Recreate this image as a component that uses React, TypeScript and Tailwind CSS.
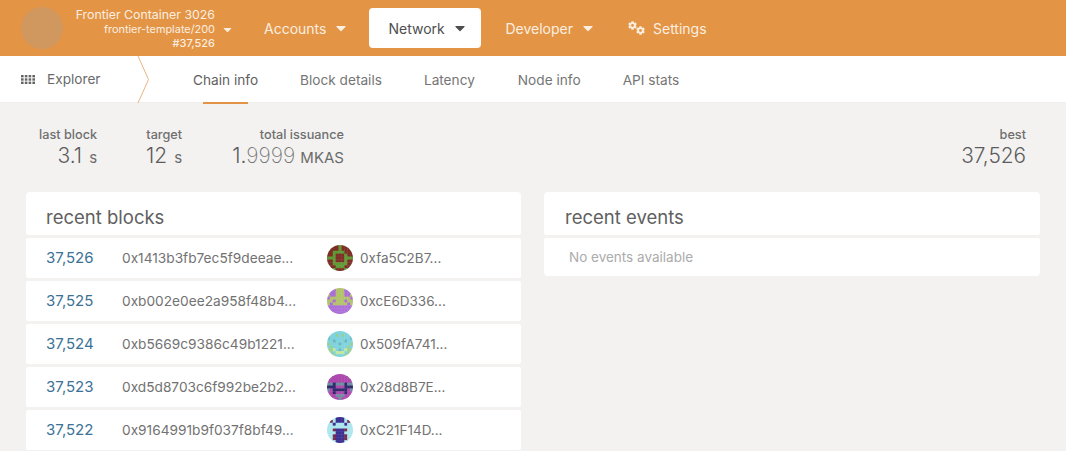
import React from "react";
import { FaCaretDown, FaCog } from "react-icons/fa";

function Identicon({ map, colors }: { map: string[]; colors: Record<string, string> }) {
  const cell = 3;
  return (
    <svg width="26" height="26" viewBox="0 0 27 27" className="shrink-0 block">
      <clipPath id="identicon-clip"><circle cx="13.5" cy="13.5" r="13.5" /></clipPath>
      <g clipPath="url(#identicon-clip)">
        {map.flatMap((row, y) =>
          row.split("").map((ch, x) => (
            <rect key={x + "-" + y} x={x * cell} y={y * cell} width={cell + 0.4} height={cell + 0.4} fill={colors[ch]} />
          ))
        )}
      </g>
    </svg>
  );
}

const blocks = [
  { n: "37,526", h: "0x1413b3fb7ec5f9deeae...", a: "0xfa5C2B7...", map: ["ggrrgrrgg", "grrrgrrrg", "rrggggrrr", "rrgrrrgrr", "gggrrrggg", "rrgrrrgrr", "rrgggggrr", "grrgggrrg", "gggrrrggg"], colors: { g: "#5f9a35", r: "#7d2f26" } },
  { n: "37,525", h: "0xb002e0ee2a958f48b4...", a: "0xcE6D336...", map: ["yppyyyppy", "pppyyyppp", "yppyyyppy", "pyyyyyyyp", "yypyyypyy", "ypyyyyypy", "ppppppppp", "ppppppppp", "ppppppppp"], colors: { p: "#ac6fd8", y: "#b3c36b" } },
  { n: "37,524", h: "0xb5669c9386c49b1221...", a: "0x509fA741...", map: ["bbbbbbbbb", "bbbgbgbbb", "tbbbbbbbt", "bbtbbbtbb", "gbbbtbbbg", "bgbbbbbgb", "gglbtblgg", "ggblllbgg", "gggbbbggg"], colors: { b: "#7fd3df", t: "#6fb7b9", g: "#98cf96", l: "#c5e79a" } },
  { n: "37,523", h: "0xd5d8703c6f992be2b2...", a: "0x28d8B7E...", map: ["nnmmmmmnn", "nmmmmmmmn", "mmmmmmmmm", "ttntttntt", "nnnmmmnnn", "tmnnnnnmt", "mmnmmmnmm", "mmmtttmmm", "mmmmtmmmm"], colors: { n: "#302a6d", m: "#ae48ae", t: "#6e8ea2" } },
  { n: "37,522", h: "0x9164991b9f037f8bf49...", a: "0xC21F14D...", map: ["cccnnnccc", "crcnnncrc", "ccncccncc", "ccccccccc", "ccrnnnrcc", "cccnnnccc", "ccrnnnrcc", "ccrnnnrcc", "cccnnnccc"], colors: { c: "#aee6ee", n: "#3b2f92", r: "#7a2a4a" } },
];

function Nav({ label, active }: { label: string; active?: boolean }) {
  return (
    <div className={active ? "h-[40px] w-[112px] pl-[19px] bg-white rounded-[4px] flex items-center gap-[7px] text-[#4e4e4e]" : "flex items-center gap-[7px] text-[#fbeee0]"}>
      <span className="text-[14px]">{label}</span>
      <FaCaretDown className="text-[16px]" />
    </div>
  );
}

function Stat({ label, children, className }: { label: string; children: React.ReactNode; className?: string }) {
  return (
    <div className={"flex flex-col items-end " + (className ?? "")}>
      <div className="text-[12.7px] leading-[16px] font-medium text-[#6f6f6f]">{label}</div>
      <div className="text-[21px] leading-[25px] font-light text-[#5c5c5c] flex items-baseline">{children}</div>
    </div>
  );
}

export default function App() {
  return (
    <div className="w-[1066px] h-[451px] overflow-hidden bg-[#f3f2f1] flex flex-col text-[#6b6b6b]" style={{ fontFamily: "Inter, 'Noto Sans', sans-serif" }}>
      <header className="h-[56px] shrink-0 bg-[#e39545] flex items-center">
        <div className="ml-[21px] w-[42px] h-[42px] rounded-full bg-[#d0975f] shrink-0" />
        <div className="ml-[12px] w-[140px] pt-[1px] flex flex-col items-end text-[#fbeee0] shrink-0">
          <div className="text-[12.35px] leading-[14px] whitespace-nowrap">Frontier Container 3026</div>
          <div className="text-[10.9px] leading-[15px] relative whitespace-nowrap">frontier-template/200<FaCaretDown className="absolute left-full ml-[6px] top-[1px] text-[13px]" /></div>
          <div className="text-[11px] leading-[13px] font-medium">#37,526</div>
        </div>
        <div className="ml-[49px]"><Nav label="Accounts" /></div>
        <div className="ml-[20px]"><Nav label="Network" active /></div>
        <div className="ml-[24px]"><Nav label="Developer" /></div>
        <div className="ml-[32px] flex items-center gap-[8px] text-[#fbeee0]">
          <div className="relative w-[17px] h-[14px] shrink-0">
            <FaCog className="absolute left-0 top-0 text-[9px]" />
            <FaCog className="absolute left-[8px] top-[5px] text-[9px]" />
          </div>
          <span className="text-[14px]">Settings</span>
        </div>
      </header>

      <nav className="h-[47px] shrink-0 bg-white flex relative text-[13.65px] text-[#757575] border-b border-[#f0efee]">
        <div className="w-[149px] pt-[1px] flex items-center shrink-0 relative">
          <svg width="14" height="9" viewBox="0 0 14 9" className="ml-[21px]" fill="#666">
            {[0, 3.3, 6.6].flatMap((y) => [0, 3.8, 7.6, 11.4].map((x) => <rect key={x + "_" + y} x={x} y={y} width="2.6" height="2.4" />))}
          </svg>
          <span className="ml-[12px] text-[#6b6b6b]">Explorer</span>
          <svg width="12" height="47" viewBox="0 0 12 47" className="absolute right-0 top-0" fill="none" stroke="#e8b582" strokeWidth="1"><path d="M1 0 L11.5 23.5 L1 47" /></svg>
        </div>
        <div className="ml-[29px] flex pt-[3px]">
          <div className="px-[15px] relative flex items-center text-[#5f5f5f]">Chain info<span className="absolute left-[25px] right-[25px] -bottom-[2px] h-[2px] bg-[#e39545]" /></div>
          <div className="ml-[12px] px-[15px] flex items-center">Block details</div>
          <div className="ml-[12px] px-[15px] flex items-center">Latency</div>
          <div className="ml-[13px] px-[15px] flex items-center">Node info</div>
          <div className="ml-[12px] px-[15px] flex items-center">API stats</div>
        </div>
      </nav>

      <section className="flex pl-[39px] pr-[40px] pt-[24px] h-[89px] shrink-0">
        <Stat label="last block"><span>3.1</span><span className="ml-[7px] text-[15px] font-normal text-[#6b6b6b]">s</span></Stat>
        <Stat label="target" className="ml-[49px]"><span>12</span><span className="ml-[7px] text-[15px] font-normal text-[#6b6b6b]">s</span></Stat>
        <Stat label="total issuance" className="ml-[50px]"><span>1.<span className="font-extralight text-[#777]">9999</span></span><span className="ml-[5px] text-[15px] font-normal text-[#6b6b6b]">MKAS</span></Stat>
        <Stat label="best" className="ml-auto"><span className="text-[20.8px]">37,526</span></Stat>
      </section>

      <main className="flex gap-[23px] pl-[26px] pr-[26px] items-start">
        <div className="w-[495px] shrink-0 flex flex-col gap-[3px]">
          <div className="h-[43px] bg-white rounded-t-[4px] rounded-b-[2px] pl-[20px] pt-[9px] flex items-center text-[18.5px] text-[#606060]">recent blocks</div>
          {blocks.map((b) => (
            <div key={b.n} className="h-[40px] bg-white rounded-[2px] flex items-center text-[#727272] shrink-0">
              <span className="w-[96px] pl-[20px] text-[15px] text-[#3d7295]">{b.n}</span>
              <span className="w-[205px] pt-[1px] text-[13.7px] whitespace-nowrap">{b.h}</span>
              <Identicon map={b.map} colors={b.colors} />
              <span className="ml-[7px] pt-[1px] text-[13.5px] whitespace-nowrap">{b.a}</span>
            </div>
          ))}
        </div>
        <div className="w-[496px] shrink-0 flex flex-col gap-[3px]">
          <div className="h-[43px] bg-white rounded-t-[4px] rounded-b-[2px] pl-[21px] pt-[9px] flex items-center text-[18.5px] text-[#606060]">recent events</div>
          <div className="h-[38px] bg-white rounded-b-[4px] rounded-t-[2px] pl-[25px] flex items-center text-[13.5px] text-[#ababab]">No events available</div>
        </div>
      </main>
    </div>
  );
}
